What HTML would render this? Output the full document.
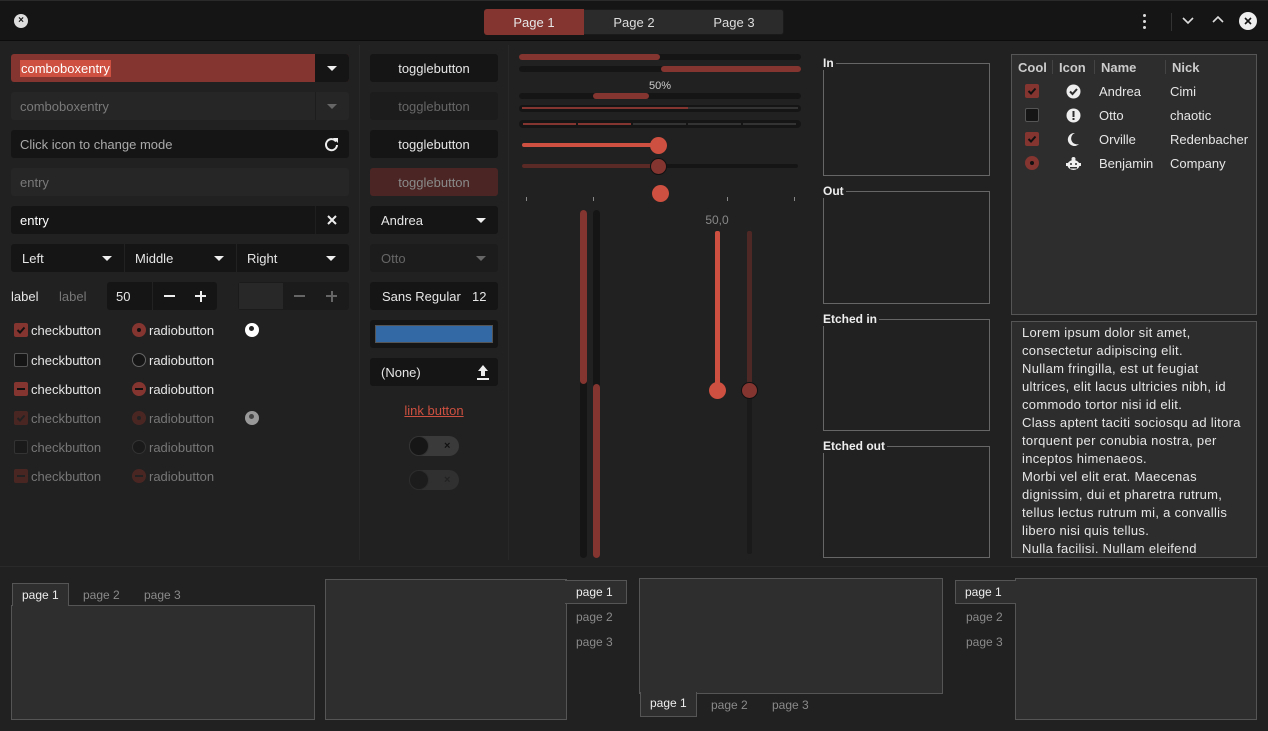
<!DOCTYPE html>
<html><head><meta charset="utf-8"><style>
*{box-sizing:border-box;margin:0;padding:0}
body{width:1268px;height:731px;background:#212121;font-family:"Liberation Sans","DejaVu Sans",sans-serif;font-size:13px;color:#e6e6e6;position:relative;overflow:hidden}
.a{position:absolute}
.w{position:absolute;background:#151515;border-radius:3px;height:28px;line-height:29px}
.d{background:#262626;color:#7a7a7a}
.t{padding-left:9px}
.c{text-align:center}
.arr{position:absolute;width:0;height:0;border-left:5px solid transparent;border-right:5px solid transparent;border-top:5px solid #eee}
.bar{position:absolute;background:#151515;border-radius:4px}
.fr{position:absolute;border:1px solid #666}
.fl{position:absolute;background:#212121;font-weight:bold;font-size:12px;padding-right:2px;line-height:13px;color:#eee}
.nb{position:absolute;background:#2e2e2e;border:1px solid #555}
.tab{position:absolute;font-size:12px;color:#8a8a8a;line-height:23px}
.tab.s{color:#eee;background:#2e2e2e;border:1px solid #555;padding:0 9px}
.cb{position:absolute;width:14px;height:14px;border-radius:2px}
.rb{position:absolute;width:14px;height:14px;border-radius:50%}
</style></head><body>
<!-- header -->
<div class="a" style="left:0;top:0;width:1268px;height:41px;background:#151515;border-top:1px solid #2a2a2a;border-bottom:1px solid #0c0c0c"></div>
<div class="a" style="left:14px;top:14px;width:14px;height:14px;border-radius:50%;background:#ddd;color:#151515;font-size:10px;font-weight:bold;line-height:14px;text-align:center">×</div>
<div class="a" style="left:484px;top:9px;width:300px;height:26px;background:#2b2b2b;border-radius:3px;border:1px solid #1a1a1a"></div>
<div class="a c" style="left:484px;top:9px;width:100px;height:26px;line-height:27px;background:#843530;border-radius:3px 0 0 3px;font-size:13px">Page 1</div>
<div class="a c" style="left:584px;top:9px;width:100px;line-height:27px;color:#ddd">Page 2</div>
<div class="a c" style="left:684px;top:9px;width:100px;line-height:27px;color:#ddd">Page 3</div>
<div class="a" style="left:1143px;top:14px;width:3px;height:3px;background:#ddd;border-radius:50%;box-shadow:0 6px 0 #ddd,0 12px 0 #ddd"></div>
<div class="a" style="left:1171px;top:13px;width:1px;height:18px;background:#333"></div>
<svg class="a" style="left:1181px;top:16px" width="14" height="10"><path d="M2 2l5 5 5-5" stroke="#ddd" stroke-width="1.6" fill="none"/></svg>
<svg class="a" style="left:1211px;top:15px" width="14" height="10"><path d="M2 7l5-5 5 5" stroke="#ddd" stroke-width="1.6" fill="none"/></svg>
<div class="a" style="left:1239px;top:12px;width:18px;height:18px;border-radius:50%;background:#eee"></div>
<svg class="a" style="left:1239px;top:12px" width="18" height="18"><path d="M6 6l6 6M12 6l-6 6" stroke="#151515" stroke-width="1.6"/></svg>

<!-- separators -->
<div class="a" style="left:359px;top:45px;width:1px;height:515px;background:#282828"></div>
<div class="a" style="left:508px;top:45px;width:1px;height:515px;background:#282828"></div>

<!-- column 1 -->
<div class="w" style="left:11px;top:54px;width:338px;background:#843530"></div>
<div class="a" style="left:315px;top:54px;width:34px;height:28px;background:#151515;border-radius:0 3px 3px 0"></div>
<div class="a" style="left:20px;top:60px;height:17px;line-height:18px;background:#cd5040;color:#fff;padding:0 1px">comboboxentry</div>
<div class="arr" style="left:327px;top:66px"></div>
<div class="w d t" style="left:11px;top:92px;width:338px">comboboxentry</div>
<div class="a" style="left:315px;top:92px;width:1px;height:28px;background:#1d1d1d"></div>
<div class="arr" style="left:327px;top:104px;border-top-color:#666"></div>
<div class="w t" style="left:11px;top:130px;width:338px;color:#aaa">Click icon to change mode</div>
<svg class="a" style="left:324px;top:137px" width="15" height="15"><path d="M12 4.5A5.5 5.5 0 1 0 13 8" stroke="#eee" stroke-width="2" fill="none"/><path d="M9 1h5v5z" fill="#eee"/></svg>
<div class="w d t" style="left:11px;top:168px;width:338px">entry</div>
<div class="w t" style="left:11px;top:206px;width:338px;color:#fff">entry</div>
<div class="a" style="left:315px;top:206px;width:1px;height:28px;background:#1f1f1f"></div>
<svg class="a" style="left:327px;top:215px" width="10" height="10"><path d="M1 1l8 8M9 1l-8 8" stroke="#eee" stroke-width="2"/></svg>
<div class="w" style="left:11px;top:244px;width:338px"></div>
<div class="a" style="left:124px;top:244px;width:1px;height:28px;background:#222"></div>
<div class="a" style="left:236px;top:244px;width:1px;height:28px;background:#222"></div>
<div class="a" style="left:22px;top:244px;line-height:29px">Left</div><div class="arr" style="left:102px;top:256px"></div>
<div class="a" style="left:135px;top:244px;line-height:29px">Middle</div><div class="arr" style="left:214px;top:256px"></div>
<div class="a" style="left:247px;top:244px;line-height:29px">Right</div><div class="arr" style="left:326px;top:256px"></div>
<div class="a" style="left:11px;top:282px;line-height:29px">label</div>
<div class="a" style="left:59px;top:282px;line-height:29px;color:#777">label</div>
<div class="w" style="left:107px;top:282px;width:110px"></div>
<div class="a" style="left:116px;top:282px;line-height:29px">50</div>
<div class="a" style="left:152px;top:282px;width:1px;height:28px;background:#222"></div>
<div class="a" style="left:164px;top:295px;width:11px;height:2px;background:#eee"></div>
<div class="a" style="left:195px;top:295px;width:11px;height:2px;background:#eee"></div><div class="a" style="left:199.5px;top:290.5px;width:2px;height:11px;background:#eee"></div>
<div class="w" style="left:238px;top:282px;width:111px;background:#1b1b1b"></div>
<div class="a" style="left:239px;top:283px;width:44px;height:26px;background:#282828"></div>
<div class="a" style="left:294px;top:295px;width:11px;height:2px;background:#666"></div>
<div class="a" style="left:326px;top:295px;width:11px;height:2px;background:#666"></div><div class="a" style="left:330.5px;top:290.5px;width:2px;height:11px;background:#666"></div>

<!-- checks -->
<div class="cb" style="left:14px;top:323px;background:#843530"></div><svg class="a" style="left:14px;top:323px" width="14" height="14"><path d="M3.5 7l2.5 2.5 4.5-5" stroke="#111" stroke-width="2" fill="none"/></svg>
<div class="a" style="left:31px;top:323px">checkbutton</div>
<div class="rb" style="left:132px;top:323px;background:#843530"></div><div class="a" style="left:137px;top:328px;width:4px;height:4px;border-radius:50%;background:#111"></div>
<div class="a" style="left:149px;top:323px">radiobutton</div>
<div class="a" style="left:245px;top:323px;width:14px;height:14px;border-radius:50%;background:#fff"></div><div class="a" style="left:249px;top:326px;width:5px;height:5px;border-radius:50%;background:#222"></div>

<div class="cb" style="left:14px;top:353px;background:#151515;border:1px solid #555"></div><div class="a" style="left:31px;top:353px">checkbutton</div>
<div class="rb" style="left:132px;top:353px;background:#151515;border:1px solid #666"></div><div class="a" style="left:149px;top:353px">radiobutton</div>

<div class="cb" style="left:14px;top:382px;background:#843530"></div><div class="a" style="left:17px;top:388px;width:8px;height:2px;background:#111"></div><div class="a" style="left:31px;top:382px">checkbutton</div>
<div class="rb" style="left:132px;top:382px;background:#843530"></div><div class="a" style="left:135px;top:388px;width:8px;height:2px;background:#111"></div><div class="a" style="left:149px;top:382px">radiobutton</div>

<div class="cb" style="left:14px;top:411px;background:#4a2623"></div><svg class="a" style="left:14px;top:411px" width="14" height="14"><path d="M3.5 7l2.5 2.5 4.5-5" stroke="#222" stroke-width="2" fill="none"/></svg><div class="a" style="left:31px;top:411px;color:#777">checkbutton</div>
<div class="rb" style="left:132px;top:411px;background:#4a2623"></div><div class="a" style="left:137px;top:416px;width:4px;height:4px;border-radius:50%;background:#222"></div><div class="a" style="left:149px;top:411px;color:#777">radiobutton</div>
<div class="a" style="left:245px;top:411px;width:14px;height:14px;border-radius:50%;background:#999"></div><div class="a" style="left:249px;top:414px;width:5px;height:5px;border-radius:50%;background:#444"></div>

<div class="cb" style="left:14px;top:440px;background:#1a1a1a;border:1px solid #333"></div><div class="a" style="left:31px;top:440px;color:#777">checkbutton</div>
<div class="rb" style="left:132px;top:440px;background:#1a1a1a;border:1px solid #333"></div><div class="a" style="left:149px;top:440px;color:#777">radiobutton</div>

<div class="cb" style="left:14px;top:469px;background:#4a2623"></div><div class="a" style="left:17px;top:475px;width:8px;height:2px;background:#222"></div><div class="a" style="left:31px;top:469px;color:#777">checkbutton</div>
<div class="rb" style="left:132px;top:469px;background:#4a2623"></div><div class="a" style="left:135px;top:475px;width:8px;height:2px;background:#222"></div><div class="a" style="left:149px;top:469px;color:#777">radiobutton</div>

<!-- column 2 -->
<div class="w c" style="left:370px;top:54px;width:128px">togglebutton</div>
<div class="w c d" style="left:370px;top:92px;width:128px;background:#1c1c1c;color:#666">togglebutton</div>
<div class="w c" style="left:370px;top:130px;width:128px">togglebutton</div>
<div class="w c" style="left:370px;top:168px;width:128px;background:#4a2523;color:#8a8a8a">togglebutton</div>
<div class="w t" style="left:370px;top:206px;width:128px;padding-left:11px">Andrea</div><div class="arr" style="left:476px;top:218px"></div>
<div class="w t" style="left:370px;top:244px;width:128px;padding-left:11px;background:#1c1c1c;color:#666">Otto</div><div class="arr" style="left:476px;top:256px;border-top-color:#666"></div>
<div class="w" style="left:370px;top:282px;width:128px"></div><div class="a" style="left:382px;top:282px;line-height:29px">Sans Regular</div><div class="a" style="left:472px;top:282px;line-height:29px">12</div>
<div class="w" style="left:370px;top:320px;width:128px"></div><div class="a" style="left:375px;top:325px;width:118px;height:18px;background:#336aa5;border:1px solid #555"></div>
<div class="w" style="left:370px;top:358px;width:128px"></div><div class="a" style="left:381px;top:358px;line-height:29px">(None)</div>
<svg class="a" style="left:476px;top:364px" width="14" height="16"><path d="M7 1l5 6H9v5H5V7H2z" fill="#eee"/><rect x="1" y="14" width="12" height="2" fill="#eee"/></svg>
<div class="a c" style="left:370px;top:403px;width:128px;color:#cd5040;text-decoration:underline">link button</div>
<div class="a" style="left:409px;top:436px;width:50px;height:20px;border-radius:10px;background:#3a3a3a"></div><div class="a" style="left:409px;top:436px;width:20px;height:20px;border-radius:50%;background:#161616;border:1px solid #333"></div><div class="a" style="left:444px;top:436px;font-size:11px;line-height:20px;color:#111;font-weight:bold">×</div>
<div class="a" style="left:409px;top:470px;width:50px;height:20px;border-radius:10px;background:#303030"></div><div class="a" style="left:409px;top:470px;width:20px;height:20px;border-radius:50%;background:#1c1c1c;border:1px solid #2c2c2c"></div><div class="a" style="left:444px;top:470px;font-size:11px;line-height:20px;color:#222;font-weight:bold">×</div>

<!-- column 3 -->
<div class="bar" style="left:519px;top:54px;width:282px;height:6px"></div><div class="bar" style="left:519px;top:54px;width:141px;height:6px;background:#843530"></div>
<div class="bar" style="left:519px;top:66px;width:282px;height:6px"></div><div class="bar" style="left:661px;top:66px;width:140px;height:6px;background:#843530"></div>
<div class="a c" style="left:630px;top:80px;width:60px;font-size:11px;color:#ccc">50%</div>
<div class="bar" style="left:519px;top:93px;width:282px;height:6px"></div><div class="bar" style="left:593px;top:93px;width:56px;height:6px;background:#843530"></div>
<div class="bar" style="left:519px;top:105px;width:282px;height:7px"></div><div class="a" style="left:522px;top:107px;width:276px;height:2px;background:#333"></div><div class="a" style="left:522px;top:107px;width:166px;height:2px;background:#843530"></div>
<div class="bar" style="left:519px;top:120px;width:282px;height:8px"></div>
<div class="a" style="left:523px;top:123px;width:53px;height:2px;background:#843530"></div><div class="a" style="left:578px;top:123px;width:53px;height:2px;background:#843530"></div><div class="a" style="left:633px;top:123px;width:53px;height:2px;background:#333"></div><div class="a" style="left:688px;top:123px;width:53px;height:2px;background:#333"></div><div class="a" style="left:743px;top:123px;width:53px;height:2px;background:#333"></div>
<div class="a" style="left:522px;top:143px;width:136px;height:4px;border-radius:2px;background:#cd5040"></div><div class="a" style="left:650px;top:137px;width:17px;height:17px;border-radius:50%;background:#cd5040"></div>
<div class="a" style="left:522px;top:164px;width:276px;height:4px;border-radius:2px;background:#151515"></div><div class="a" style="left:522px;top:164px;width:136px;height:4px;border-radius:2px;background:#5a2a26"></div><div class="a" style="left:650px;top:158px;width:17px;height:17px;border-radius:50%;background:#843530;border:1px solid #111"></div>
<div class="a" style="left:652px;top:185px;width:17px;height:17px;border-radius:50%;background:#cd5040"></div>
<div class="a" style="left:526px;top:197px;width:1px;height:4px;background:#888"></div><div class="a" style="left:593px;top:197px;width:1px;height:4px;background:#888"></div><div class="a" style="left:727px;top:197px;width:1px;height:4px;background:#888"></div><div class="a" style="left:794px;top:197px;width:1px;height:4px;background:#888"></div>
<div class="a" style="left:580px;top:210px;width:7px;height:348px;border-radius:4px;background:#151515"></div><div class="a" style="left:580px;top:210px;width:7px;height:174px;border-radius:4px;background:#843530"></div>
<div class="a" style="left:593px;top:210px;width:7px;height:348px;border-radius:4px;background:#151515"></div><div class="a" style="left:593px;top:384px;width:7px;height:174px;border-radius:4px;background:#843530"></div>
<div class="a c" style="left:697px;top:213px;width:40px;font-size:12px;color:#888">50,0</div>
<div class="a" style="left:715px;top:231px;width:5px;height:160px;border-radius:2px;background:#cd5040"></div><div class="a" style="left:709px;top:382px;width:17px;height:17px;border-radius:50%;background:#cd5040"></div>
<div class="a" style="left:747px;top:231px;width:5px;height:323px;border-radius:2px;background:#1a1a1a"></div><div class="a" style="left:747px;top:231px;width:5px;height:160px;border-radius:2px;background:#4e2825"></div><div class="a" style="left:741px;top:382px;width:17px;height:17px;border-radius:50%;background:#843530;border:1px solid #111"></div>

<!-- frames -->
<div class="fr" style="left:823px;top:63px;width:167px;height:113px"></div><div class="fl" style="left:823px;top:57px">In</div>
<div class="fr" style="left:823px;top:191px;width:167px;height:113px"></div><div class="fl" style="left:823px;top:185px">Out</div>
<div class="fr" style="left:823px;top:319px;width:167px;height:112px"></div><div class="fl" style="left:823px;top:313px">Etched in</div>
<div class="fr" style="left:823px;top:446px;width:167px;height:112px"></div><div class="fl" style="left:823px;top:440px">Etched out</div>

<!-- tree -->
<div class="a" style="left:1011px;top:54px;width:246px;height:261px;background:#2d2d2d;border:1px solid #555"></div>
<div class="a" style="left:1018px;top:60px;font-weight:bold;color:#ccc">Cool</div>
<div class="a" style="left:1052px;top:60px;width:1px;height:14px;background:#444"></div>
<div class="a" style="left:1059px;top:60px;font-weight:bold;color:#ccc">Icon</div>
<div class="a" style="left:1094px;top:60px;width:1px;height:14px;background:#444"></div>
<div class="a" style="left:1101px;top:60px;font-weight:bold;color:#ccc">Name</div>
<div class="a" style="left:1165px;top:60px;width:1px;height:14px;background:#444"></div>
<div class="a" style="left:1172px;top:60px;font-weight:bold;color:#ccc">Nick</div>
<div class="cb" style="left:1025px;top:84px;background:#843530"></div><svg class="a" style="left:1025px;top:84px" width="14" height="14"><path d="M3.5 7l2.5 2.5 4.5-5" stroke="#111" stroke-width="2" fill="none"/></svg>
<div class="cb" style="left:1025px;top:108px;background:#151515;border:1px solid #555"></div>
<div class="cb" style="left:1025px;top:132px;background:#843530"></div><svg class="a" style="left:1025px;top:132px" width="14" height="14"><path d="M3.5 7l2.5 2.5 4.5-5" stroke="#111" stroke-width="2" fill="none"/></svg>
<div class="rb" style="left:1025px;top:156px;background:#843530"></div><div class="a" style="left:1030px;top:161px;width:4px;height:4px;border-radius:50%;background:#111"></div>
<svg class="a" style="left:1066px;top:84px" width="15" height="15"><circle cx="7.5" cy="7.5" r="7" fill="#eee"/><path d="M4 7.5l2.5 2.5 4.5-5" stroke="#2d2d2d" stroke-width="2" fill="none"/></svg>
<svg class="a" style="left:1066px;top:108px" width="15" height="15"><circle cx="7.5" cy="7.5" r="7" fill="#eee"/><rect x="6.5" y="3" width="2" height="6" fill="#2d2d2d"/><rect x="6.5" y="10" width="2" height="2" fill="#2d2d2d"/></svg>
<svg class="a" style="left:1066px;top:132px" width="15" height="15"><path d="M9 1A6.5 6.5 0 1 0 13 12 5.5 5.5 0 0 1 9 1z" fill="#eee"/></svg>
<svg class="a" style="left:1065px;top:156px" width="17" height="15"><circle cx="8.5" cy="3" r="2" fill="#eee"/><ellipse cx="8.5" cy="9" rx="6" ry="5" fill="#eee"/><rect x="1" y="7" width="15" height="3" fill="#eee"/><circle cx="6" cy="8" r="1" fill="#2d2d2d"/><circle cx="11" cy="8" r="1" fill="#2d2d2d"/><rect x="5" y="11" width="7" height="1.5" fill="#2d2d2d"/></svg>
<div class="a" style="left:1099px;top:84px">Andrea</div><div class="a" style="left:1170px;top:84px">Cimi</div>
<div class="a" style="left:1099px;top:108px">Otto</div><div class="a" style="left:1170px;top:108px">chaotic</div>
<div class="a" style="left:1099px;top:132px">Orville</div><div class="a" style="left:1170px;top:132px">Redenbacher</div>
<div class="a" style="left:1099px;top:156px">Benjamin</div><div class="a" style="left:1170px;top:156px">Company</div>

<!-- text view -->
<div class="a" style="left:1011px;top:321px;width:246px;height:237px;background:#2d2d2d;border:1px solid #555;overflow:hidden;padding:2px 12px 2px 10px;line-height:18px;font-size:13px;letter-spacing:0.3px">Lorem ipsum dolor sit amet, consectetur adipiscing elit.<br>Nullam fringilla, est ut feugiat ultrices, elit lacus ultricies nibh, id commodo tortor nisi id elit.<br>Class aptent taciti sociosqu ad litora torquent per conubia nostra, per inceptos himenaeos.<br>Morbi vel elit erat. Maecenas dignissim, dui et pharetra rutrum, tellus lectus rutrum mi, a convallis libero nisi quis tellus.<br>Nulla facilisi. Nullam eleifend lobortis nisl.</div>

<!-- bottom separator -->
<div class="a" style="left:0;top:566px;width:1268px;height:1px;background:#2a2a2a"></div>

<!-- notebook 1 -->
<div class="nb" style="left:11px;top:605px;width:304px;height:115px"></div>
<div class="tab s" style="left:12px;top:583px;height:23px;border-bottom:none">page 1</div>
<div class="tab" style="left:83px;top:584px">page 2</div>
<div class="tab" style="left:144px;top:584px">page 3</div>
<!-- notebook 2 -->
<div class="nb" style="left:325px;top:579px;width:242px;height:141px"></div>
<div class="tab s" style="left:565px;top:580px;height:24px;width:62px;border-left:none;padding-left:11px">page 1</div>
<div class="tab" style="left:576px;top:606px">page 2</div>
<div class="tab" style="left:576px;top:631px">page 3</div>
<!-- notebook 3 -->
<div class="nb" style="left:639px;top:578px;width:304px;height:116px"></div>
<div class="tab s" style="left:640px;top:692px;height:25px;border-top:none">page 1</div>
<div class="tab" style="left:711px;top:694px">page 2</div>
<div class="tab" style="left:772px;top:694px">page 3</div>
<!-- notebook 4 -->
<div class="nb" style="left:1015px;top:578px;width:242px;height:142px"></div>
<div class="tab s" style="left:955px;top:580px;height:24px;width:61px;border-right:none">page 1</div>
<div class="tab" style="left:966px;top:606px">page 2</div>
<div class="tab" style="left:966px;top:631px">page 3</div>
</body></html>
